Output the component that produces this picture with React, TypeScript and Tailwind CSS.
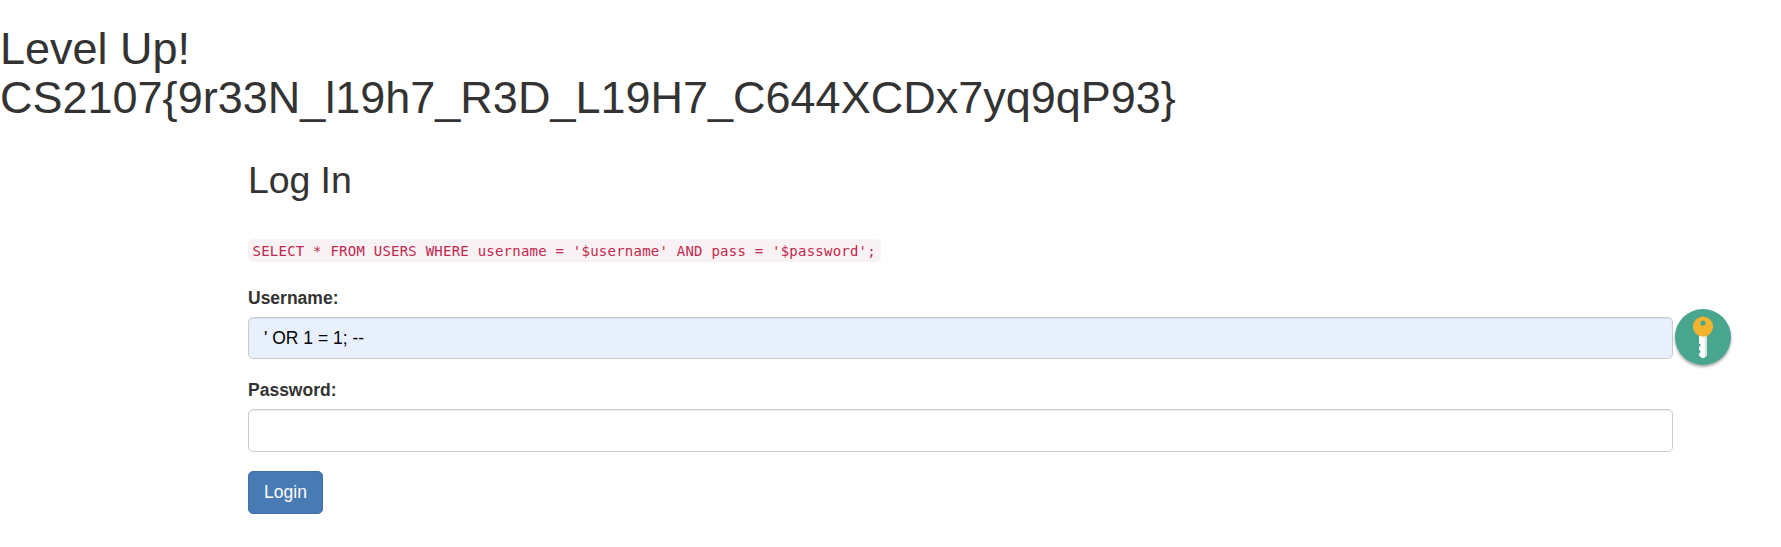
import { useState } from "react";

const inputClass =
  "block h-[42.5px] w-full rounded-[5px] border border-[#ccc] px-[15px] pt-[7.5px] pb-[7.5px] text-[17.5px] leading-[25px] text-black shadow-[inset_0_1px_1px_rgba(0,0,0,0.075)] outline-none";

function KeyBadge() {
  return (
    <div className="absolute top-[-8px] left-full ml-[2px] h-[56px] w-[56px] rounded-full bg-[#48a68f] shadow-[0_2px_3px_rgba(0,0,0,0.35)]">
      <svg viewBox="0 0 56 56" className="h-full w-full" aria-hidden="true">
        <path
          d="M24 25h8v21.5l-3 2.5h-2l-3-2.5v-2.3a1.6 1.6 0 0 0 0-3.2v-3.2a1.6 1.6 0 0 0 0-3.2z"
          fill="#fff"
        />
        <path d="M29.8 25h2.2v21.5l-2.2 1.8z" fill="#d9e0df" />
        <path
          fillRule="evenodd"
          d="M28 7.5a10.1 10.1 0 1 0 0 20.2a10.1 10.1 0 0 0 0-20.2zm0 4a2.6 2.6 0 1 1 0 5.2a2.6 2.6 0 0 1 0-5.2z"
          fill="#f3b530"
        />
        <path d="M19 13.2a10.1 10.1 0 0 1 18 0a10.8 10.8 0 0 0-18 0z" fill="#c89f31" />
      </svg>
    </div>
  );
}

export default function App() {
  const [username, setUsername] = useState("' OR 1 = 1; --");
  const [password, setPassword] = useState("");

  return (
    <main className="min-h-screen bg-white font-['Liberation_Sans',Arial,sans-serif] text-[17.5px] leading-[25px] text-[#333]">
      <h1 className="pt-[23.5px] text-[45px] leading-[49.5px]">
        Level Up!
        <br />
        CS2107&#123;9r33N_l19h7_R3D_L19H7_C644XCDx7yq9qP93&#125;
      </h1>
      <div className="ml-[248px] w-[1425px] pt-[37px]">
        <h2 className="text-[37.5px] leading-[41.25px] tracking-[-0.1px]">Log In</h2>
        <code className="mt-[37.75px] block h-[23px] w-[632.5px] rounded-[5px] bg-[#f9f2f4] px-[4.5px] font-['DejaVu_Sans_Mono',monospace] text-[14px] leading-[24px] tracking-[0.23px] whitespace-nowrap text-[#c0284e]">
          SELECT * FROM USERS WHERE username = '$username' AND pass = '$password';
        </code>
        <form className="mt-[24px]" onSubmit={(e) => e.preventDefault()}>
          <div className="mb-[18.75px]">
            <label htmlFor="username" className="mb-[6.25px] block font-bold">
              Username:
            </label>
            <div className="relative">
              <input
                id="username"
                type="text"
                value={username}
                onChange={(e) => setUsername(e.target.value)}
                className={`${inputClass} bg-[#e8f0fe]`}
              />
              <KeyBadge />
            </div>
          </div>
          <div className="mb-[18.75px]">
            <label htmlFor="password" className="mb-[6.25px] block font-bold">
              Password:
            </label>
            <input
              id="password"
              type="password"
              value={password}
              onChange={(e) => setPassword(e.target.value)}
              className={`${inputClass} bg-white`}
            />
          </div>
          <button
            type="submit"
            className="block h-[43px] w-[75px] rounded-[5px] border border-[#3f70a7] bg-[#487ab4] text-center text-white"
          >
            Login
          </button>
        </form>
      </div>
    </main>
  );
}
